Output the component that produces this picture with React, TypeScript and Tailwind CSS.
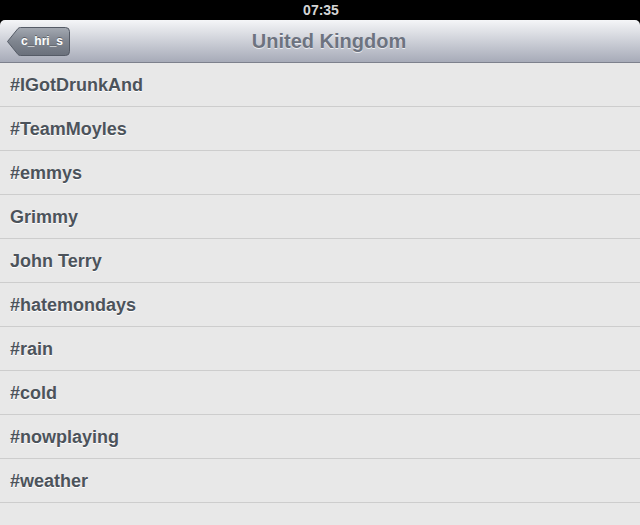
import React from "react";

const TRENDS = [
  "#IGotDrunkAnd",
  "#TeamMoyles",
  "#emmys",
  "Grimmy",
  "John Terry",
  "#hatemondays",
  "#rain",
  "#cold",
  "#nowplaying",
  "#weather",
];

function BackButton({ label }: { label: string }) {
  return (
    <button className="relative h-[29px] w-[63px] flex items-center justify-center pl-[7px]">
      <svg className="absolute inset-0" width="63" height="29" viewBox="0 0 63 29">
        <defs>
          <linearGradient id="bb" x1="0" y1="0" x2="0" y2="1">
            <stop offset="0" stopColor="#a4a9b2" />
            <stop offset="0.5" stopColor="#7f858f" />
            <stop offset="1" stopColor="#6a707b" />
          </linearGradient>
        </defs>
        <path
          d="M0.5 14.5 L11 1.5 Q12 0.5 13.5 0.5 L58.5 0.5 Q62.5 0.5 62.5 4.5 L62.5 24.5 Q62.5 28.5 58.5 28.5 L13.5 28.5 Q12 28.5 11 27.5 Z"
          fill="url(#bb)"
          stroke="#555b66"
          strokeWidth="1"
        />
      </svg>
      <span className="relative text-[12px] font-bold text-white [text-shadow:0_-1px_0_rgba(0,0,0,0.35)]">
        {label}
      </span>
    </button>
  );
}

export default function App() {
  return (
    <div className="w-[640px] h-[525px] bg-black flex flex-col overflow-hidden font-['Liberation_Sans',Arial,sans-serif]">
      {/* Status bar */}
      <div className="h-[20px] flex items-center justify-center pl-[2px]">
        <span className="text-[14px] font-bold text-[#d4d4d4]">07:35</span>
      </div>

      {/* Nav bar */}
      <div className="h-[43px] rounded-t-[5px] bg-gradient-to-b from-[#f5f6f8] to-[#a7abb8] border-b border-[#7d818d] flex items-center px-[7px]">
        <BackButton label="c_hri_s" />
        <div className="flex-1 text-center pr-[45px]">
          <span className="text-[20px] font-bold text-[#6d7380] [text-shadow:0_1px_0_rgba(255,255,255,0.7)]">
            United Kingdom
          </span>
        </div>
      </div>

      {/* Trend list */}
      <div className="flex-1 bg-[#e8e8e8]">
        {TRENDS.map((t) => (
          <div
            key={t}
            className="h-[44px] border-b border-[#cdcdcd] flex items-center px-[10px] pt-[2px]"
          >
            <span className="text-[18px] font-bold text-[#4c535b] [text-shadow:0_1px_0_#ffffff]">
              {t}
            </span>
          </div>
        ))}
      </div>
    </div>
  );
}
